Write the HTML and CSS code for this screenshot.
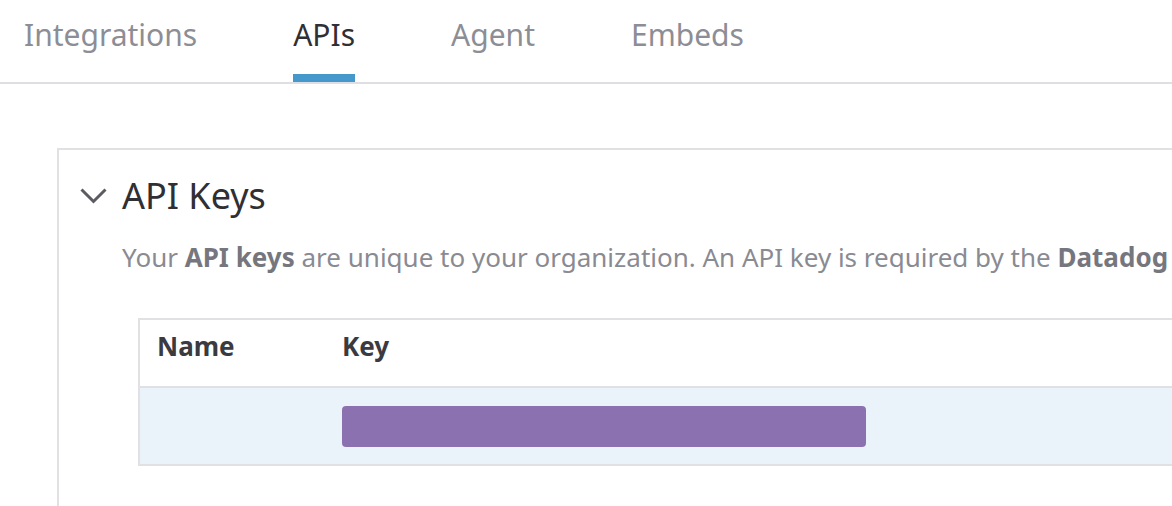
FILE: index.html
```html
<!DOCTYPE html>
<html>
<head>
<meta charset="utf-8">
<link rel="stylesheet" href="styles.css">
</head>
<body>
<nav class="tabs">
  <a class="tab first">Integrations</a>
  <a class="tab active">APIs</a>
  <a class="tab">Agent</a>
  <a class="tab">Embeds</a>
</nav>
<section class="card">
  <div class="card-head">
    <svg class="chevron" width="28" height="16" viewBox="0 0 28 16"><polyline points="1.5,1.5 13.5,13.5 25.5,1.5" fill="none" stroke="#5b5b62" stroke-width="3"/></svg>
    <h2 class="title">API Keys</h2>
  </div>
  <p class="desc">Your <b>API keys</b> are unique to your organization. An API key is required by the <b>Datadog</b></p>
  <div class="table">
    <div class="row head">
      <div class="cell name">Name</div>
      <div class="cell key">Key</div>
    </div>
    <div class="row body">
      <div class="cell name"></div>
      <div class="cell key"><span class="keybar"></span></div>
    </div>
  </div>
</section>
</body>
</html>
```
FILE: styles.css
```css
html, body {
  margin: 0;
  padding: 0;
  background: #fff;
  overflow: hidden;
  font-family: "Noto Sans", "Open Sans", sans-serif;
}
body {
  width: 1172px;
  height: 506px;
}
.tabs {
  display: flex;
  border-bottom: 2px solid #dedee3;
  height: 82px;
  padding-left: 24px;
}
.tab {
  display: block;
  font-size: 30px;
  line-height: 41px;
  padding-top: 14px;
  padding-bottom: 19px;
  height: 41px;
  border-bottom: 8px solid transparent;
  margin-right: 96px;
  color: #8d8d95;
  white-space: nowrap;
}
.tab.active {
  color: #2f2f34;
  border-bottom-color: #4598cb;
}
.card {
  margin: 64px 0 0 57px;
  width: 1300px;
  height: 400px;
  border: 2px solid #e1e1e5;
  box-sizing: border-box;
}
.card-head {
  display: flex;
  align-items: center;
  padding: 24px 0 0 21px;
  height: 44px;
}
.chevron {
  display: block;
  margin-right: 14px;
  margin-top: 0;
}
.title {
  margin: 0;
  font-size: 36px;
  line-height: 44px;
  font-weight: 400;
  color: #2f2f34;
}
.desc {
  margin: 22px 0 0 63px;
  font-size: 26px;
  line-height: 34px;
  color: #8a8a92;
  white-space: nowrap;
}
.desc b {
  color: #76767e;
  font-weight: 700;
}
.table {
  margin: 44px 0 0 79px;
  border: 2px solid #e1e1e5;
  border-right: none;
}
.row {
  display: flex;
}
.row.head {
  height: 66px;
  border-bottom: 2px solid #e1e1e5;
}
.row.head .cell {
  font-size: 26px;
  line-height: 34px;
  font-weight: 700;
  color: #3a3a40;
  padding-top: 9px;
}
.row.body {
  height: 76px;
  background: #ebf3fa;
}
.cell.name {
  width: 185px;
  padding-left: 17px;
}
.cell.key {
  flex: 1;
}
.row.body .cell.key {
  padding-top: 18px;
}
.keybar {
  display: block;
  width: 524px;
  height: 41px;
  border-radius: 4px;
  background: #8c71b0;
}
```
